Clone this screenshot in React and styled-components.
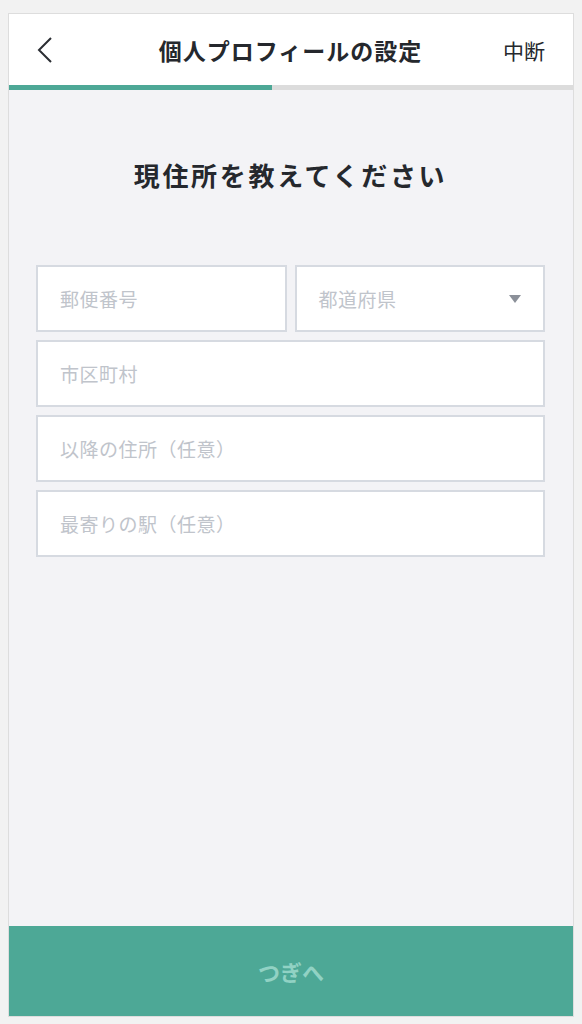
import React from "react";
import styled, { createGlobalStyle } from "styled-components";

const GlobalStyle = createGlobalStyle`
    html, body {
        margin: 0;
        padding: 0;
        background-color: #f2f2f2;
    }
    body {
        font-family: "Noto Sans CJK JP", "Noto Sans", sans-serif;
        color: #25282d;
    }
`

const fields = [
    { id: "city", label: "市区町村" },
    { id: "street", label: "以降の住所（任意）" },
    { id: "station", label: "最寄りの駅（任意）" },
]

const App = () => {
    return (
        <>
            <GlobalStyle />
            <Page>
                <Frame>
                    <Header>
                        <BackButton aria-label="戻る">
                            <svg width="18" height="28" viewBox="0 0 18 28" fill="none">
                                <path d="M15 2 L3 14 L15 26" stroke="#2b2e33" strokeWidth="2" />
                            </svg>
                        </BackButton>
                        <HeaderTitle>個人プロフィールの設定</HeaderTitle>
                        <QuitButton>中断</QuitButton>
                    </Header>
                    <Progress>
                        <ProgressFill style={{ width: "46.7%" }} />
                    </Progress>
                    <Content>
                        <Title>現住所を教えてください</Title>
                        <Form>
                            <Row>
                                <Field placeholder="郵便番号" />
                                <SelectBox>
                                    <span>都道府県</span>
                                    <Caret />
                                </SelectBox>
                            </Row>
                            {fields.map((f) => (
                                <Field key={f.id} placeholder={f.label} />
                            ))}
                        </Form>
                    </Content>
                    <NextButton disabled>つぎへ</NextButton>
                </Frame>
            </Page>
        </>
    )
}

const Page = styled.div`
    padding: 13px 8px 7px;
`

const Frame = styled.div`
    display: flex;
    flex-direction: column;
    height: 1004px;
    box-sizing: border-box;
    border: 1px solid #dddddd;
    background-color: #f3f3f6;
`

const Header = styled.header`
    display: flex;
    align-items: center;
    justify-content: space-between;
    height: 71px;
    padding: 0 28px 0 27px;
    background-color: #ffffff;
    flex-shrink: 0;
`

const BackButton = styled.button`
    display: flex;
    align-items: center;
    width: 60px;
    padding: 0;
    border: none;
    background: none;
`

const HeaderTitle = styled.h1`
    margin: 0;
    font-size: 23px;
    font-weight: 700;
    letter-spacing: 1px;
    color: #25282d;
`

const QuitButton = styled.button`
    width: 60px;
    padding: 0;
    border: none;
    background: none;
    text-align: right;
    font-family: inherit;
    font-size: 21px;
    font-weight: 400;
    color: #25282d;
`

const Progress = styled.div`
    height: 5px;
    background-color: #dcdcdc;
    flex-shrink: 0;
`

const ProgressFill = styled.div`
    height: 100%;
    background-color: #4da896;
`

const Content = styled.main`
    flex: 1;
    padding: 67px 28px 0 27px;
`

const Title = styled.h2`
    margin: 0 0 72px;
    font-size: 26px;
    line-height: 36px;
    font-weight: 700;
    letter-spacing: 2.7px;
    text-align: center;
    color: #25282d;
`

const Form = styled.div`
    display: flex;
    flex-direction: column;
    gap: 8px;
`

const Row = styled.div`
    display: grid;
    grid-template-columns: 1fr 1fr;
    gap: 8px;
`

const Field = styled.input`
    box-sizing: border-box;
    width: 100%;
    height: 67px;
    padding: 0 22px;
    border: 2px solid #d6dae1;
    background-color: #ffffff;
    font-family: inherit;
    font-size: 19px;
    letter-spacing: 0.5px;
    color: #25282d;
    outline: none;

    &::placeholder {
        color: #c0c4cb;
    }
`

const SelectBox = styled.div`
    box-sizing: border-box;
    display: flex;
    align-items: center;
    justify-content: space-between;
    height: 67px;
    padding: 0 22px 0 22px;
    border: 2px solid #d6dae1;
    background-color: #ffffff;
    font-size: 19px;
    letter-spacing: 0.5px;
    color: #c0c4cb;
`

const Caret = styled.span`
    width: 0;
    height: 0;
    border-left: 6px solid transparent;
    border-right: 6px solid transparent;
    border-top: 8px solid #8b9099;
`

const NextButton = styled.button`
    height: 90px;
    flex-shrink: 0;
    border: none;
    background-color: #4da896;
    font-family: inherit;
    font-size: 22px;
    font-weight: 700;
    color: #91d2c4;
`

export default App;
